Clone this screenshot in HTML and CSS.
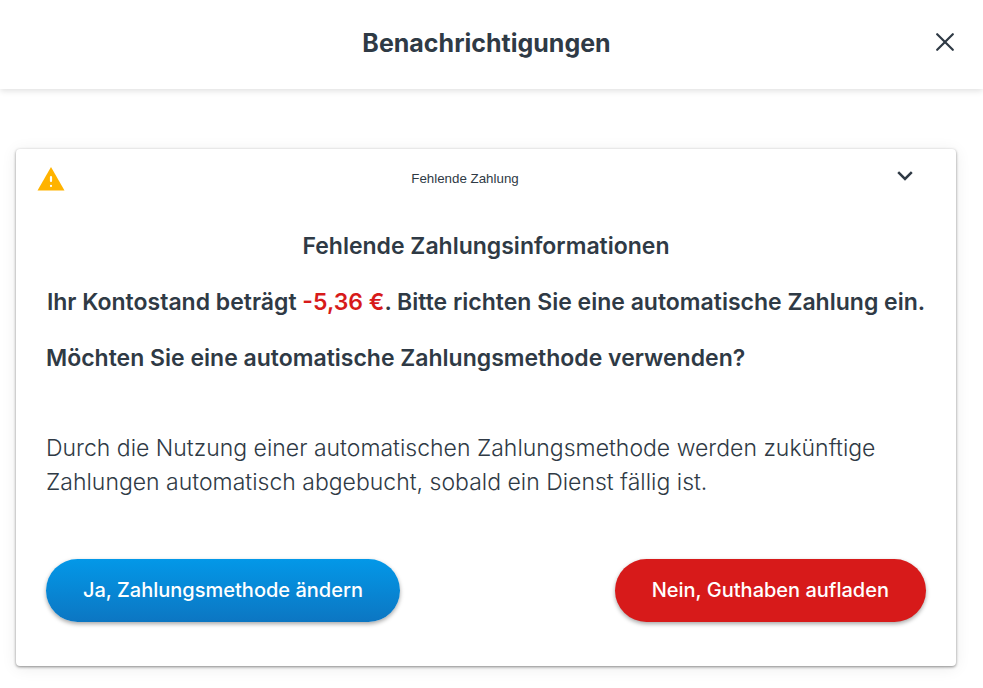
FILE: index.html
```html
<!DOCTYPE html>
<html lang="de">
<head>
    <meta charset="UTF-8">
    <meta name="viewport" content="width=device-width, initial-scale=1.0">
    <title>Benachrichtigungen</title>
    <link rel="stylesheet" href="styles.css">
</head>
<body>
    <header class="header">
        <h1>Benachrichtigungen</h1>
        <button type="button" class="close" aria-label="Schließen">
            <svg width="18" height="18" viewBox="0 0 18 18" fill="none" stroke="currentColor" stroke-width="2.2" stroke-linecap="round">
                <path d="M1.2 1.2l15.600 15.600M16.800 1.200L1.200 16.800"/>
            </svg>
        </button>
    </header>

    <main class="content">
        <section class="card">
            <button type="button" class="card-header" aria-expanded="true">
                <svg class="warning" width="28" height="24" viewBox="0 0 28 24">
                    <path fill="#ffb300" d="M14 0l13.500 23.500H.5z"/>
                    <path fill="none" stroke="#fff" stroke-width="2.200" stroke-linecap="round" d="M14 10v4M14 18.800v.2"/>
                </svg>
                <span class="card-title">Fehlende Zahlung</span>
                <svg class="chevron" width="16" height="10" viewBox="0 0 16 10" fill="none" stroke="currentColor" stroke-width="2.500">
                    <path d="M1.200 1.200L8 8l6.800-6.800"/>
                </svg>
            </button>

            <div class="card-body">
                <h2 class="center">Fehlende Zahlungsinformationen</h2>
                <h2 class="center">Ihr Kontostand beträgt <span class="amount">-5,36 €</span>. Bitte richten Sie eine automatische Zahlung ein.</h2>
                <h2>Möchten Sie eine automatische Zahlungsmethode verwenden?</h2>
                <p>Durch die Nutzung einer automatischen Zahlungsmethode werden zukünftige Zahlungen automatisch abgebucht, sobald ein Dienst fällig ist.</p>
                <div class="actions">
                    <button type="button" class="btn btn-primary">Ja, Zahlungsmethode ändern</button>
                    <button type="button" class="btn btn-danger">Nein, Guthaben aufladen</button>
                </div>
            </div>
        </section>
    </main>
</body>
</html>
```
FILE: styles.css
```css
* {
    box-sizing: border-box;
}
body {
    margin: 0;
    font-family: Inter, sans-serif;
    color: #2f3a45;
    background-color: #fff;
}
button {
    border: none;
    cursor: pointer;
}
.header {
    display: grid;
    grid-template-columns: 52px 1fr 48px;
    align-items: center;
    height: 89px;
    padding: 0 14px 4px 0;
    box-shadow: 0 2px 6px rgba(0, 0, 0, 0.12);
}
.header h1 {
    grid-column: 2;
    margin: 0;
    font-size: 25px;
    font-weight: 700;
    text-align: center;
}
.close {
    padding: 14px 15px 16px;
    color: inherit;
    background: none;
    line-height: 0;
}
.content {
    padding: 60px 27px 22px 16px;
}
.card {
    border-radius: 4px;
    box-shadow: 0 1px 3px rgba(0, 0, 0, 0.45), 0 2px 16px rgba(0, 0, 0, 0.08);
}
.card-header {
    display: flex;
    align-items: center;
    width: 100%;
    height: 60px;
    padding: 0 43px 2px 21px;
    color: inherit;
    background: none;
}
.warning {
    margin-top: 2px;
}
.card-title {
    flex: 1;
    padding-right: 32px;
    font-family: "Liberation Sans", Arial, sans-serif;
}
.chevron {
    margin-bottom: 4px;
}
.card-body {
    padding: 20px 30px 44px;
}
.card-body h2 {
    margin: 0 0 22px;
    font-size: 23px;
    font-weight: 600;
    line-height: 34px;
}
.card-body .center {
    text-align: center;
}
.amount {
    color: #d71a1a;
}
.card-body p {
    margin: 56px 0 60px;
    font-size: 23px;
    font-weight: 350;
    line-height: 34px;
}
.actions {
    display: flex;
    flex-wrap: wrap;
    justify-content: space-between;
    gap: 16px;
}
.btn {
    height: 63px;
    padding: 0 37px 2px;
    border-radius: 32px;
    font-family: inherit;
    font-size: 20px;
    font-weight: 500;
    color: #fff;
    box-shadow: 0 2px 4px rgba(0, 0, 0, 0.35);
}
.btn-primary {
    background: linear-gradient(#0398e8, #0c76c2);
}
.btn-danger {
    background: #d71a1a;
}
```
